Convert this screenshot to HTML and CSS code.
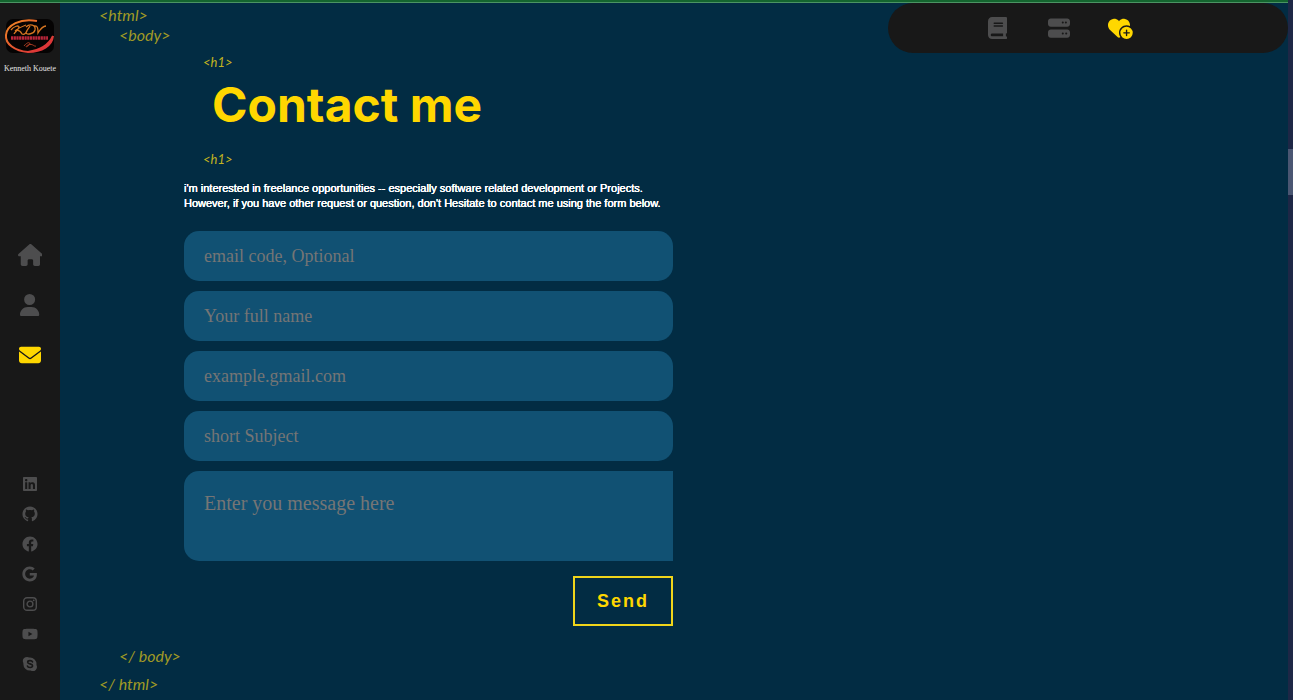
FILE: index.html
```html
<!DOCTYPE html>
<html lang="en">
<head>
<meta charset="utf-8">
<meta name="viewport" content="width=device-width, initial-scale=1">
<title>Contact me</title>
<link rel="stylesheet" href="styles.css">
</head>
<body>
<div class="page">
  <aside class="sidebar">
    <a class="brand" href="#" aria-label="Kenneth Kouete">
      <svg class="brand-logo" viewBox="0 0 48 34" aria-hidden="true">
        <defs>
          <linearGradient id="ring" x1="0" y1="0" x2="1" y2="1">
            <stop offset="0" stop-color="#f08a24"/>
            <stop offset="1" stop-color="#d8243c"/>
          </linearGradient>
        </defs>
        <rect width="48" height="34" rx="7" fill="#050303"/>
        <path d="M31 2C14 -1 1 6 0 16C-1 25 9 32 22 33C36 33 46 27 47 17M22 33C36 31 43 26 47 17" fill="none" stroke="url(#ring)" stroke-width="2"/>
        <path d="M5 11C8 7 13 6 13 8C13 10 9 13 8 15M20 6C15 8 10 11 9 12C13 10 15 13 16 15C18 16 20 14 21 12M20 8C24 4 30 6 29 11C28 15 21 16 20 14C20 12 23 9 24 7M28 7C32 6 32 10 32 14C35 9 37 7 40 7" fill="none" stroke="#d67522" stroke-width="1.3"/>
        <path d="M5 19H42" stroke="#b8263a" stroke-width="3.5" stroke-dasharray="2.2 .5"/>
        <path d="M18 27C21 23 24 23 24 25C21 29 18 28 22 26C27 24 28 28 30 27" fill="none" stroke="#a93b22" stroke-width="1"/>
      </svg>
      <span class="brand-name">Kenneth Kouete</span>
    </a>
    <nav class="main-nav" aria-label="Main">
      <a href="#" aria-label="Home"><svg viewBox="0 0 576 512"><path d="M575.8 255.5c0 18-15 32.1-32 32.1l-32 0 .7 160.2c0 2.7-.2 5.4-.5 8.1l0 16.2c0 22.1-17.9 40-40 40l-16 0c-1.1 0-2.2 0-3.3-.1c-1.4 .1-2.8 .1-4.2 .1L416 512l-24 0c-22.1 0-40-17.9-40-40l0-24 0-64c0-17.7-14.3-32-32-32l-64 0c-17.7 0-32 14.3-32 32l0 64 0 24c0 22.1-17.9 40-40 40l-24 0-31.9 0c-1.5 0-3-.1-4.5-.2c-1.2 .1-2.4 .2-3.6 .2l-16 0c-22.1 0-40-17.9-40-40l0-112c0-.9 0-1.9 .1-2.8l0-69.7-32 0c-18 0-32-14-32-32.1c0-9 3-17 10-24L266.4 8c7-7 15-8 22-8s15 2 21 7L564.8 231.5c8 7 12 15 11 24z"/></svg></a>
      <a href="#" aria-label="About"><svg viewBox="0 0 448 512"><path d="M224 256A128 128 0 1 0 224 0a128 128 0 1 0 0 256zm-45.7 48C79.8 304 0 383.8 0 482.3C0 498.7 13.3 512 29.7 512l388.6 0c16.4 0 29.7-13.3 29.7-29.7C448 383.8 368.2 304 269.7 304l-91.4 0z"/></svg></a>
      <a class="active" href="#" aria-label="Contact"><svg viewBox="0 0 512 512"><path d="M48 64C21.5 64 0 85.5 0 112c0 15.1 7.1 29.3 19.2 38.4L236.8 313.6c11.4 8.5 27 8.5 38.4 0L492.8 150.4c12.1-9.1 19.2-23.3 19.2-38.4c0-26.5-21.5-48-48-48L48 64zM0 176L0 384c0 35.3 28.7 64 64 64l384 0c35.3 0 64-28.7 64-64l0-208L294.4 339.2c-22.8 17.1-54 17.1-76.8 0L0 176z"/></svg></a>
    </nav>
    <nav class="social-nav" aria-label="Social">
      <a href="#" aria-label="LinkedIn"><svg viewBox="0 0 448 512"><path d="M416 32H31.9C14.3 32 0 46.5 0 64.3v383.4C0 465.5 14.3 480 31.9 480H416c17.6 0 32-14.5 32-32.3V64.3c0-17.8-14.4-32.3-32-32.3zM135.4 416H69V202.2h66.5V416zm-33.2-243c-21.3 0-38.5-17.3-38.5-38.5S80.9 96 102.2 96c21.2 0 38.5 17.3 38.5 38.5 0 21.3-17.2 38.5-38.5 38.5zm282.1 243h-66.4V312c0-24.8-.5-56.7-34.5-56.7-34.6 0-39.9 27-39.9 54.9V416h-66.4V202.2h63.7v29.2h.9c8.9-16.8 30.6-34.5 62.9-34.5 67.2 0 79.7 44.3 79.7 101.9V416z"/></svg></a>
      <a href="#" aria-label="GitHub"><svg viewBox="-.5 -.5 17 17"><path d="M8 0C3.58 0 0 3.58 0 8c0 3.54 2.29 6.53 5.47 7.59.4.07.55-.17.55-.38 0-.19-.01-.82-.01-1.49-2.01.37-2.53-.49-2.69-.94-.09-.23-.48-.94-.82-1.13-.28-.15-.68-.52-.01-.53.63-.01 1.08.58 1.23.82.72 1.21 1.87.87 2.33.66.07-.52.28-.87.51-1.07-1.78-.2-3.64-.89-3.64-3.95 0-.87.31-1.59.82-2.15-.08-.2-.36-1.02.08-2.12 0 0 .67-.21 2.2.82.64-.18 1.32-.27 2-.27s1.36.09 2 .27c1.53-1.04 2.2-.82 2.2-.82.44 1.1.16 1.92.08 2.12.51.56.82 1.27.82 2.15 0 3.07-1.87 3.75-3.65 3.95.29.25.54.73.54 1.48 0 1.07-.01 1.93-.01 2.2 0 .21.15.46.55.38A8.01 8.01 0 0 0 16 8c0-4.42-3.58-8-8-8z"/></svg></a>
      <a href="#" aria-label="Facebook"><svg viewBox="-.5 -.5 17 17"><path d="M16 8.049c0-4.446-3.582-8.05-8-8.05C3.58 0-.002 3.603-.002 8.05c0 4.017 2.926 7.347 6.75 7.951v-5.625h-2.03V8.05H6.75V6.275c0-2.017 1.195-3.131 3.022-3.131.876 0 1.791.157 1.791.157v1.98h-1.009c-.993 0-1.303.621-1.303 1.258v1.51h2.218l-.354 2.326H9.25V16c3.824-.604 6.75-3.934 6.75-7.951"/></svg></a>
      <a href="#" aria-label="Google"><svg viewBox="-12 -12 512 536"><path d="M488 261.8C488 403.3 391.1 504 248 504 110.8 504 0 393.2 0 256S110.8 8 248 8c66.8 0 123 24.5 166.3 64.9l-67.5 64.9C258.5 52.6 94.3 116.6 94.3 256c0 86.5 69.1 156.6 153.7 156.6 98.2 0 135-70.4 140.8-106.9H248v-85.3h236.1c2.3 12.7 3.9 24.9 3.9 41.4z"/></svg></a>
      <a href="#" aria-label="Instagram"><svg viewBox="0 0 16 16"><g fill="none" stroke="currentColor" stroke-width="1.4"><rect x="1.7" y="1.7" width="12.6" height="12.6" rx="3.4"/><circle cx="8" cy="8" r="2.9"/></g><circle cx="11.7" cy="4.3" r=".9"/></svg></a>
      <a href="#" aria-label="YouTube"><svg viewBox="0 0 576 512"><path d="M549.655 124.083c-6.281-23.65-24.787-42.276-48.284-48.597C458.781 64 288 64 288 64S117.22 64 74.629 75.486c-23.497 6.322-42.003 24.947-48.284 48.597-11.412 42.867-11.412 132.305-11.412 132.305s0 89.438 11.412 132.305c6.281 23.65 24.787 41.5 48.284 47.821C117.22 448 288 448 288 448s170.78 0 213.371-11.486c23.497-6.321 42.003-24.171 48.284-47.821 11.412-42.867 11.412-132.305 11.412-132.305s0-89.438-11.412-132.305zm-317.51 213.508V175.185l142.739 81.205-142.739 81.201z"/></svg></a>
      <a href="#" aria-label="Skype"><svg viewBox="-1 -1 18 18"><path d="M4.671 0c.88 0 1.733.247 2.468.702a7.42 7.42 0 0 1 6.02 2.118 7.37 7.37 0 0 1 2.167 5.215q0 .517-.072 1.026a4.66 4.66 0 0 1 .6 2.281 4.645 4.645 0 0 1-1.37 3.294A4.67 4.67 0 0 1 11.18 16c-.84 0-1.658-.226-2.37-.644a7.42 7.42 0 0 1-6.114-2.107A7.37 7.37 0 0 1 .529 8.035q.001-.545.08-1.081a4.644 4.644 0 0 1 .76-5.59A4.68 4.68 0 0 1 4.67 0z"/><path d="M10.8 5.6C10.2 3.8 5.4 3.6 5.4 6C5.4 8.4 10.9 7.3 10.9 10C10.9 12.5 5.6 12.4 5.1 10.2" fill="none" stroke="#181818" stroke-width="1.8" stroke-linecap="round"/></svg></a>
    </nav>
  </aside>

  <div class="content">
    <div class="progress"></div>
    <nav class="top-nav" aria-label="Sections">
      <a href="#" aria-label="Resume"><svg viewBox="0 0 448 512"><path d="M96 0C43 0 0 43 0 96L0 416c0 53 43 96 96 96l288 0 32 0c17.7 0 32-14.3 32-32s-14.3-32-32-32l0-64c17.7 0 32-14.3 32-32l0-320c0-17.7-14.3-32-32-32L384 0 96 0zm0 384l256 0 0 64L96 448c-17.7 0-32-14.3-32-32s14.3-32 32-32zm32-240c0-8.8 7.2-16 16-16l192 0c8.8 0 16 7.2 16 16s-7.2 16-16 16l-192 0c-8.8 0-16-7.2-16-16zm16 48l192 0c8.8 0 16 7.2 16 16s-7.2 16-16 16l-192 0c-8.8 0-16-7.2-16-16s7.2-16 16-16z"/></svg></a>
      <a href="#" aria-label="Services"><svg viewBox="0 0 512 512"><path d="M64 32C28.7 32 0 60.7 0 96l0 64c0 35.3 28.7 64 64 64l384 0c35.3 0 64-28.7 64-64l0-64c0-35.3-28.7-64-64-64L64 32zm280 72a24 24 0 1 1 0 48 24 24 0 1 1 0-48zm48 24a24 24 0 1 1 48 0 24 24 0 1 1 -48 0zM64 288c-35.3 0-64 28.7-64 64l0 64c0 35.3 28.7 64 64 64l384 0c35.3 0 64-28.7 64-64l0-64c0-35.3-28.7-64-64-64L64 288zm280 72a24 24 0 1 1 0 48 24 24 0 1 1 0-48zm56 24a24 24 0 1 1 48 0 24 24 0 1 1 -48 0z"/></svg></a>
      <a class="active" href="#" aria-label="Support"><svg viewBox="0 0 576 512"><path d="M47.6 300.4L228.3 469.1c7.5 7 17.4 10.9 27.7 10.9s20.2-3.9 27.7-10.9l2.6-2.4C267.2 438.6 256 404.6 256 368c0-97.2 78.8-176 176-176c28.3 0 55 6.7 78.7 18.5c.9-6.5 1.3-13 1.3-19.6v-5.8c0-69.9-50.5-129.5-119.4-141C347 36.5 300.6 51.4 268 84L256 96 244 84c-32.6-32.6-79-47.5-124.6-39.9C50.5 55.6 0 115.2 0 185.1v5.8c0 41.5 17.2 81.2 47.6 109.5zM432 512a144 144 0 1 0 0-288 144 144 0 1 0 0 288zm16-208v48h48c8.8 0 16 7.2 16 16s-7.2 16-16 16H448v48c0 8.8-7.2 16-16 16s-16-7.2-16-16V384H368c-8.8 0-16-7.2-16-16s7.2-16 16-16h48V304c0-8.8 7.2-16 16-16s16 7.2 16 16z"/></svg></a>
    </nav>

    <main class="main">
      <div class="tag">&lt;html&gt;</div>
      <div class="tag tag-inner">&lt;body&gt;</div>
      <section class="contact">
        <div class="tag tag-h1">&lt;h1&gt;</div>
        <h1 class="title">Contact me</h1>
        <div class="tag tag-h1">&lt;h1&gt;</div>
        <p class="intro">i'm interested in freelance opportunities -- especially software related development or Projects.<br>However, if you have other request or question, don't Hesitate to contact me using the form below.</p>
        <form class="form">
          <input class="field" type="text" placeholder="email code, Optional" aria-label="Email code">
          <input class="field" type="text" placeholder="Your full name" aria-label="Full name">
          <input class="field" type="email" placeholder="example.gmail.com" aria-label="Email">
          <input class="field" type="text" placeholder="short Subject" aria-label="Subject">
          <textarea class="field message" placeholder="Enter you message here" aria-label="Message"></textarea>
          <button class="send" type="submit">Send</button>
        </form>
      </section>
      <div class="tag tag-inner">&lt;/ body&gt;</div>
      <div class="tag">&lt;/ html&gt;</div>
    </main>
  </div>

  <div class="scroll-track"><div class="scroll-thumb"></div></div>
</div>
</body>
</html>
```
FILE: styles.css
```css
* { box-sizing: border-box; }

body {
  margin: 0;
  background: #022c43;
  font-family: "Liberation Sans", Arial, sans-serif;
}

.page {
  display: grid;
  grid-template-columns: 60px 1fr 5px;
  min-height: 100vh;
}

svg { display: block; fill: currentColor; }

a { color: #4d4d4e; text-decoration: none; }

a.active { color: #ffd700; }

.sidebar {
  display: flex;
  flex-direction: column;
  align-items: center;
  padding: 19px 0 21px;
  background: #181818;
}

.brand {
  display: flex;
  flex-direction: column;
  align-items: center;
  gap: 8px;
}

.brand-logo { width: 48px; height: 34px; overflow: visible; }

.brand-name {
  color: #e4e4e4;
  font: 8px/16px "Liberation Serif", serif;
  white-space: nowrap;
}

.main-nav { margin-top: 153px; }

.main-nav a {
  display: flex;
  align-items: center;
  justify-content: center;
  width: 60px;
  height: 50px;
}

.main-nav svg, .top-nav svg { height: 22px; }

.social-nav { margin-top: auto; }

.social-nav a {
  display: flex;
  align-items: center;
  justify-content: center;
  width: 60px;
  height: 30px;
}

.social-nav svg { width: auto; height: 16px; max-width: 16px; }

.content { position: relative; }

/* The bar runs across the sidebar as well as the content. */
.progress {
  position: absolute;
  top: 0;
  right: 0;
  left: -60px;
  height: 3px;
  background: #14652f;
  border-bottom: 1px solid #4b9463;
}

.top-nav {
  position: absolute;
  top: 3px;
  right: 0;
  display: flex;
  align-items: center;
  width: 400px;
  height: 50px;
  padding-left: 100px;
  background: #181818;
  border-radius: 25px;
}

.top-nav a { width: 60px; }

.main { padding: 5px 39px 0; }

.tag {
  color: #a19a25;
  font: italic 400 16px/20px Lato, sans-serif;
}

.tag-inner { margin-left: 20px; }

.contact {
  max-width: 574px;
  padding-left: 85px;
}

.tag-inner + .contact { margin-top: 7px; margin-bottom: 20px; }

.contact + .tag-inner { margin-bottom: 8px; }

.tag-h1 { margin-left: 19px; color: #c4b420; font-size: 13px; }

.title {
  margin: 4px 0 16px 28px;
  color: #ffd700;
  font-family: Inter, "Liberation Sans", sans-serif;
  font-size: 48px;
  font-weight: 700;
  line-height: 57px;
  white-space: nowrap;
}

/* Regular glyphs thickened by a shadow: a semi-bold look at regular width. */
.intro {
  margin: 12px 0 20px;
  color: #fff;
  font-size: 11px;
  line-height: 15px;
  text-shadow: 0 0 0 #fff, 0 0 0 #fff;
  white-space: nowrap;
}

.form {
  display: flex;
  flex-direction: column;
  gap: 10px;
}

.field {
  display: block;
  width: 100%;
  height: 50px;
  padding: 0 20px;
  border: 0;
  border-radius: 15px;
  outline: 0;
  background: #115173;
  color: #fff;
  font: 18px/24px "Liberation Serif", serif;
}

.field::placeholder { color: #757575; opacity: 1; }

.message {
  height: 90px;
  padding: 20px;
  border-radius: 15px 0 0 15px;
  font-size: 20px;
  resize: none;
}

.send {
  align-self: flex-end;
  width: 100px;
  height: 50px;
  margin-top: 5px;
  padding: 0;
  border: 2px solid #f0d51a;
  background: transparent;
  color: #ffd700;
  font: bold 18px/24px "Liberation Sans", Arial, sans-serif;
  letter-spacing: 2px;
}

.scroll-track { padding-top: 149px; background: #1e2746; }

.scroll-thumb { height: 46px; background: #4a5672; }
```
